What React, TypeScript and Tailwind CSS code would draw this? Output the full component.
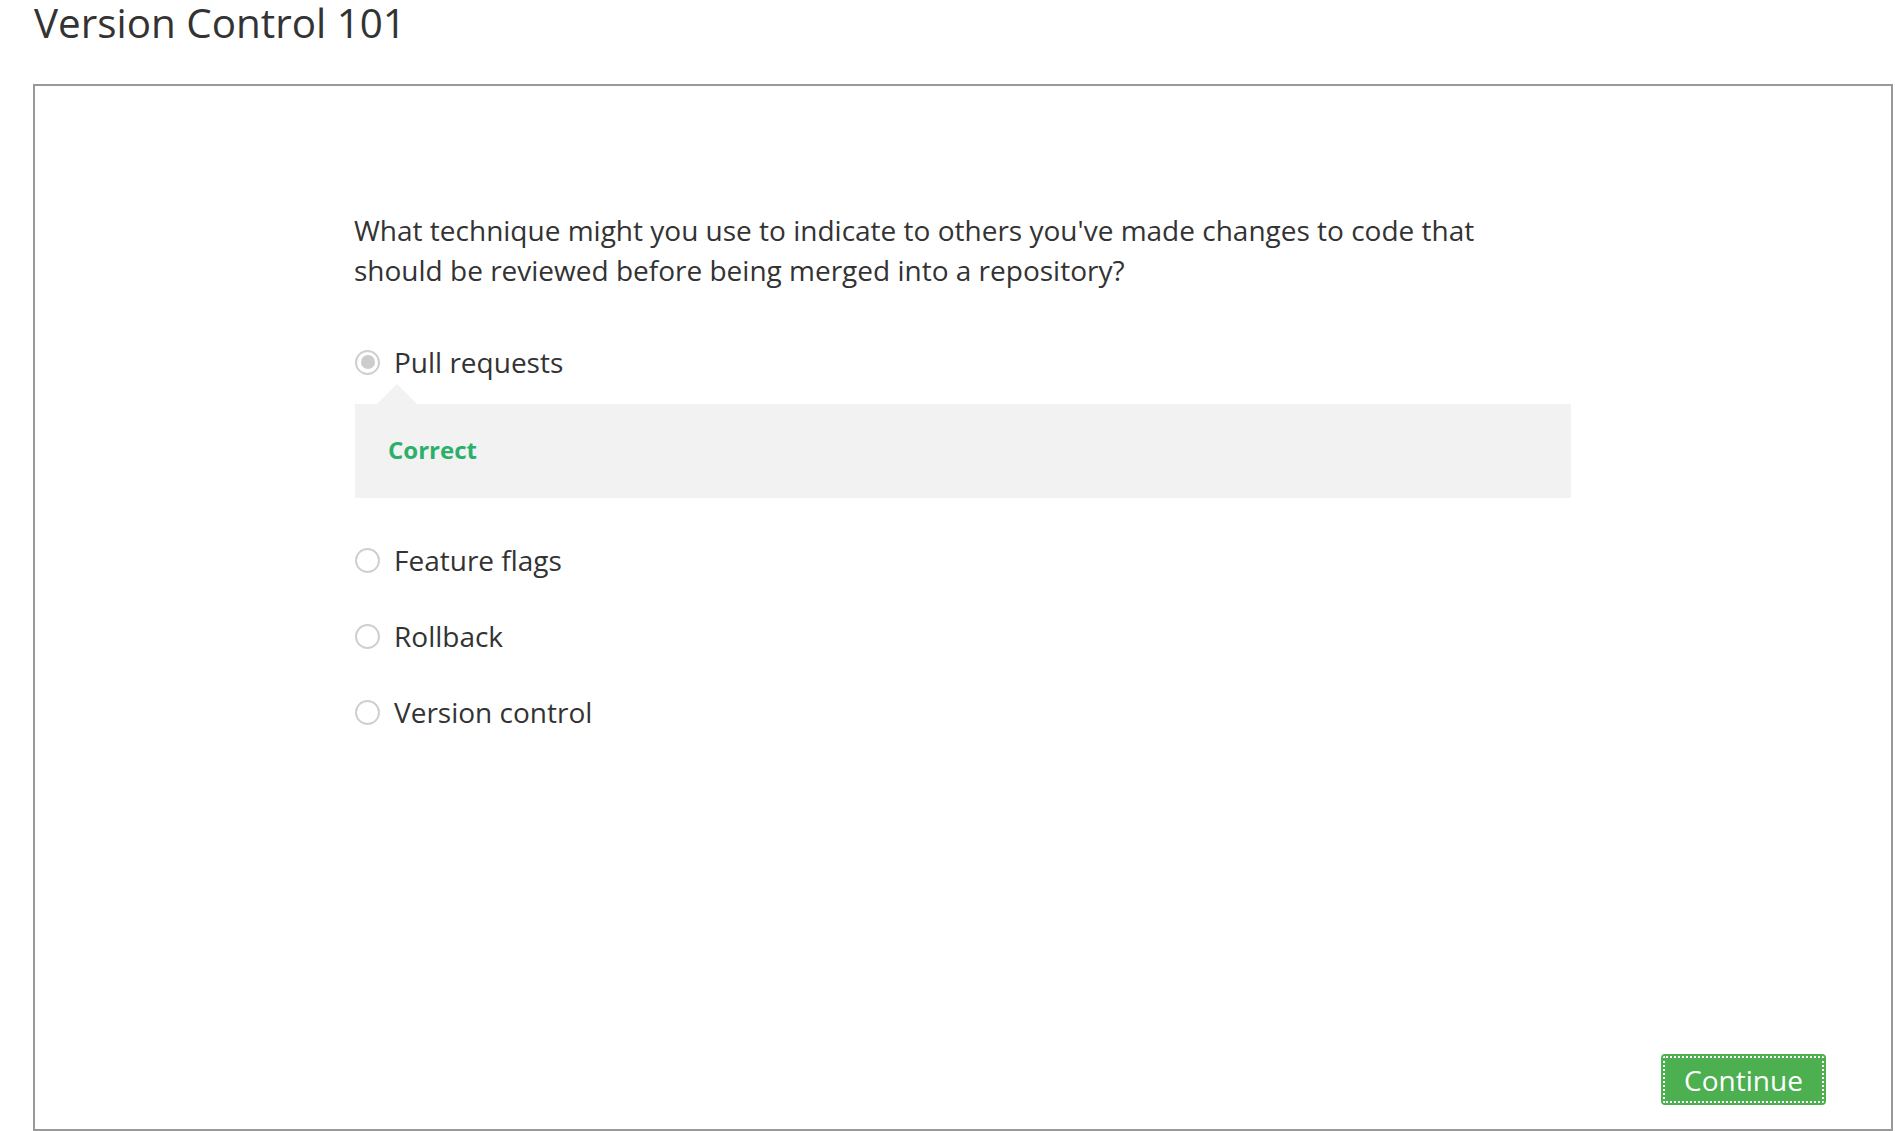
import React from "react";

const font = { fontFamily: '"Open Sans", "Noto Sans", sans-serif' };

function Radio({ checked }: { checked?: boolean }) {
  return (
    <span className="flex h-[25px] w-[25px] shrink-0 items-center justify-center rounded-full border-2 border-[#cfcfcf] bg-white">
      {checked && <span className="h-[14px] w-[14px] rounded-full bg-[#cccccc]" />}
    </span>
  );
}

function Option({ label, checked }: { label: string; checked?: boolean }) {
  return (
    <label className="flex h-[40px] items-center gap-[14px]">
      <Radio checked={checked} />
      <span className="text-[28px] leading-[40px] text-[#333333]">{label}</span>
    </label>
  );
}

export default function App() {
  return (
    <div className="min-h-screen bg-white text-[#333333]" style={font}>
      <h1 className="ml-[34px] text-[40.4px] font-normal leading-[46px] text-[#333333]">
        Version Control 101
      </h1>
      <div className="ml-[33px] mt-[38px] flex h-[1047px] w-[1860px] flex-col border-2 border-[#999999]">
        <div className="ml-[318px] mt-[124px] w-[1218px]">
          <p className="w-[1190px] pl-[1px] text-[28px] leading-[40px] text-[#333333]">
            What technique might you use to indicate to others you've made changes to code that should be reviewed before being merged into a repository?
          </p>
          <div className="mt-[52px] pl-[2px]">
            <Option label="Pull requests" checked />
            <div className="relative mt-[22px] h-[94px] w-[1216px] bg-[#f2f2f2] pl-[33px] pt-[30px]">
              <span className="absolute left-[22px] top-[-20px] h-0 w-0 border-x-[20px] border-b-[20px] border-x-transparent border-b-[#f2f2f2]" />
              <span className="text-[24px] font-bold leading-[32px] text-[#2bb06a]">Correct</span>
            </div>
            <div className="mt-[42px] flex flex-col gap-[36px]">
              <Option label="Feature flags" />
              <Option label="Rollback" />
              <Option label="Version control" />
            </div>
          </div>
        </div>
        <div className="flex-1" />
        <div className="mb-[24px] mr-[65px] flex justify-end">
          <button className="h-[51px] w-[165px] rounded-[4px] bg-[#4caf50] text-[28px] leading-[40px] text-white outline-2 outline-dotted outline-white -outline-offset-4">
            Continue
          </button>
        </div>
      </div>
    </div>
  );
}
